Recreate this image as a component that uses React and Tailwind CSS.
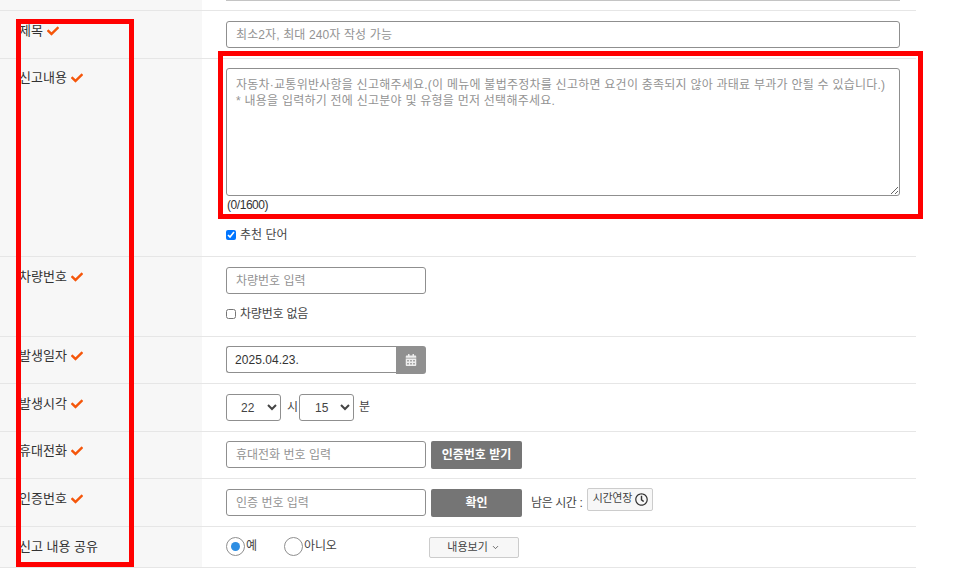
import { FaCheck, FaCalendarAlt, FaRegClock } from 'react-icons/fa';
import { ChevronDown } from 'lucide-react';

const inputClass =
  'h-[27px] border border-[#8f8f8f] rounded-[3px] px-[9px] text-[12px] text-[#333] bg-white outline-none placeholder:text-[#939393]';
const grayBtn =
  'h-[28px] w-[91px] bg-[#757575] rounded-[2px] text-white text-[12px] font-bold';
const radioClass =
  'w-[19px] h-[19px] m-0 p-[4px] appearance-none rounded-full border border-[#8f8f8f] bg-white bg-clip-content checked:bg-[#2e8ee3]';

function Row({ label, required = true, className = '', children }) {
  return (
    <div className="flex border-b border-[#e6e6e6]">
      <div className="w-[202px] shrink-0 bg-[#f7f7f7] pl-[19px]">
        <div className={`flex items-center gap-[4px] text-[13px] leading-[18px] text-[#333] ${className}`}>
          {label}
          {required && <FaCheck className="text-[#f5560a] text-[12px]" />}
        </div>
      </div>
      <div className="flex-1 min-w-0 pl-[24px]">{children}</div>
    </div>
  );
}

export default function App() {
  return (
    <div className="relative w-[959px] h-[577px] overflow-hidden bg-white font-['Liberation_Sans','Noto_Sans_CJK_KR',sans-serif]">
      <div className="w-[916px]">
        <div className="flex h-[11px] border-b border-[#e6e6e6]">
          <div className="w-[202px] bg-[#f7f7f7]" />
          <div className="pl-[24px]">
            <div className="w-[674px] h-px bg-[#c4c4c4]" />
          </div>
        </div>

        <Row label="제목" className="pt-[11px]">
          <div className="h-[47px] pt-[10px]">
            <input className={`${inputClass} w-[674px] tracking-[0.12px]`} placeholder="최소2자, 최대 240자 작성 가능" />
          </div>
        </Row>

        <Row label="신고내용" className="pt-[10px]">
          <div className="h-[197px] pt-[9px]">
            <textarea
              className="block w-[674px] h-[128px] border border-[#8f8f8f] rounded-[3px] px-[9px] py-[8px] text-[12px] leading-[16px] tracking-[0.24px] outline-none placeholder:text-[#939393]"
              placeholder={'자동차·교통위반사항을 신고해주세요.(이 메뉴에 불법주정차를 신고하면 요건이 충족되지 않아 과태료 부과가 안될 수 있습니다.)\n* 내용을 입력하기 전에 신고분야 및 유형을 먼저 선택해주세요.'}
            />
            <div className="text-[12px] leading-[14px] mt-[2px] ml-px tracking-[-0.45px] text-[#333]">(0/1600)</div>
            <label className="flex items-center gap-[4px] mt-[15px] text-[12px] leading-[16px] text-[#444]">
              <input type="checkbox" defaultChecked className="w-[10px] h-[10px] m-0" />
              추천 단어
            </label>
          </div>
        </Row>

        <Row label="차량번호" className="pt-[11px]">
          <div className="h-[79px] pt-[10px]">
            <input className={`${inputClass} block w-[200px]`} placeholder="차량번호 입력" />
            <label className="flex items-center gap-[4px] mt-[12px] text-[12px] leading-[16px] tracking-[-0.2px] text-[#444]">
              <input type="checkbox" className="w-[10px] h-[10px] m-0" />
              차량번호 없음
            </label>
          </div>
        </Row>

        <Row label="발생일자" className="pt-[10px]">
          <div className="flex h-[46px] pt-[9px]">
            <input className={`${inputClass} w-[170px] rounded-r-none border-r-0 pl-[8px] tracking-[0.05px]`} defaultValue="2025.04.23." />
            <button className="w-[30px] h-[28px] bg-[#909090] rounded-r-[3px] flex items-center justify-center">
              <FaCalendarAlt className="text-[#eeeeee] text-[12px]" />
            </button>
          </div>
        </Row>

        <Row label="발생시각" className="pt-[11px]">
          <div className="flex items-center h-[47px] pt-[10px] pb-[10px] text-[12px] text-[#444]">
            <select className="w-[55px] h-[27px] border border-[#8f8f8f] rounded-[3px] pl-[10px] text-[12px]" defaultValue="22">
              <option>22</option>
            </select>
            <span className="ml-[6px] mr-px -mt-[2px]">시</span>
            <select className="w-[55px] h-[27px] border border-[#8f8f8f] rounded-[3px] pl-[11px] text-[12px]" defaultValue="15">
              <option>15</option>
            </select>
            <span className="ml-[5px] -mt-[2px]">분</span>
          </div>
        </Row>

        <Row label="휴대전화" className="pt-[10px]">
          <div className="flex gap-[5px] h-[46px] pt-[9px]">
            <input className={`${inputClass} w-[200px]`} placeholder="휴대전화 번호 입력" />
            <button className={grayBtn}>인증번호 받기</button>
          </div>
        </Row>

        <Row label="인증번호" className="pt-[11px]">
          <div className="flex h-[47px] pt-[9px]">
            <input className={`${inputClass} w-[200px] mt-[1px]`} placeholder="인증 번호 입력" />
            <button className={`${grayBtn} ml-[5px] mt-[1px]`}>확인</button>
            <span className="ml-[9px] mt-[6px] text-[12px] leading-[18px] tracking-[-0.4px] text-[#444]">남은 시간 :</span>
            <button className="ml-[5px] h-[23px] w-[66px] border border-[#ccc] rounded-[2px] bg-[#f7f7f7] flex items-center justify-center gap-[3px] text-[11px] tracking-[-0.3px] text-[#444]">
              <span className="-mt-[2px]">시간연장</span>
              <FaRegClock className="text-[13px] text-[#333]" />
            </button>
          </div>
        </Row>

        <Row label="신고 내용 공유" required={false} className="pt-[11px]">
          <div className="flex items-start h-[40px] pt-[10px] text-[12px] text-[#444]">
            <input type="radio" name="share" defaultChecked className={radioClass} />
            <span className="ml-px mt-px leading-[16px]">예</span>
            <input type="radio" name="share" className={`${radioClass} ml-[27px]`} />
            <span className="ml-px mt-px leading-[16px] tracking-[-0.2px]">아니오</span>
            <button className="ml-[92px] w-[90px] h-[21px] border border-[#ccc] rounded-[2px] bg-[#f7f7f7] flex items-center justify-center gap-[3px] text-[11px] text-[#444]">
              내용보기
              <ChevronDown size={9} />
            </button>
          </div>
        </Row>
      </div>

      {/* annotation boxes drawn over the form */}
      <div className="absolute left-[16px] top-[19px] w-[118px] h-[548px] border-[5px] border-[#ff0000]" />
      <div className="absolute left-[218px] top-[51px] w-[705px] h-[168px] border-[5px] border-[#ff0000]" />
    </div>
  );
}
